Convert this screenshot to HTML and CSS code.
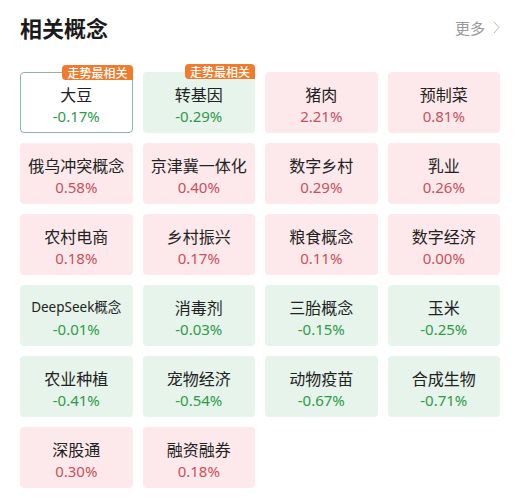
FILE: index.html
```html
<!DOCTYPE html>
<html lang="zh-CN">
<head>
<meta charset="utf-8">
<link rel="stylesheet" href="styles.css">
</head>
<body>
<div class="panel">
  <div class="header">
    <h1 class="title">相关概念</h1>
    <div class="more">更多<svg class="chev" width="7" height="13" viewBox="0 0 7 13"><path d="M1 1 L6 6.5 L1 12" fill="none" stroke="#b8b8b8" stroke-width="1"/></svg></div>
  </div>
  <div class="grid">
    <div class="card sel"><span class="badge">走势最相关</span><div class="name">大豆</div><div class="pct down">-0.17%</div></div>
    <div class="card green"><span class="badge">走势最相关</span><div class="name">转基因</div><div class="pct down">-0.29%</div></div>
    <div class="card red"><div class="name">猪肉</div><div class="pct up">2.21%</div></div>
    <div class="card red"><div class="name">预制菜</div><div class="pct up">0.81%</div></div>

    <div class="card red"><div class="name">俄乌冲突概念</div><div class="pct up">0.58%</div></div>
    <div class="card red"><div class="name">京津冀一体化</div><div class="pct up">0.40%</div></div>
    <div class="card red"><div class="name">数字乡村</div><div class="pct up">0.29%</div></div>
    <div class="card red"><div class="name">乳业</div><div class="pct up">0.26%</div></div>

    <div class="card red"><div class="name">农村电商</div><div class="pct up">0.18%</div></div>
    <div class="card red"><div class="name">乡村振兴</div><div class="pct up">0.17%</div></div>
    <div class="card red"><div class="name">粮食概念</div><div class="pct up">0.11%</div></div>
    <div class="card red"><div class="name">数字经济</div><div class="pct up">0.00%</div></div>

    <div class="card green"><div class="name small">DeepSeek概念</div><div class="pct down">-0.01%</div></div>
    <div class="card green"><div class="name">消毒剂</div><div class="pct down">-0.03%</div></div>
    <div class="card green"><div class="name">三胎概念</div><div class="pct down">-0.15%</div></div>
    <div class="card green"><div class="name">玉米</div><div class="pct down">-0.25%</div></div>

    <div class="card green"><div class="name">农业种植</div><div class="pct down">-0.41%</div></div>
    <div class="card green"><div class="name">宠物经济</div><div class="pct down">-0.54%</div></div>
    <div class="card green"><div class="name">动物疫苗</div><div class="pct down">-0.67%</div></div>
    <div class="card green"><div class="name">合成生物</div><div class="pct down">-0.71%</div></div>

    <div class="card red"><div class="name">深股通</div><div class="pct up">0.30%</div></div>
    <div class="card red"><div class="name">融资融券</div><div class="pct up">0.18%</div></div>
  </div>
</div>
</body>
</html>
```
FILE: styles.css
```css
* { box-sizing: border-box; }
html, body {
  margin: 0;
  padding: 0;
  background: #ffffff;
}
body {
  font-family: "Noto Sans", "Noto Sans CJK SC", sans-serif;
  color: #222222;
}
.panel {
  width: 520px;
  padding: 10px 20px 0 20px;
}
.header {
  display: flex;
  align-items: center;
  justify-content: space-between;
  height: 34px;
}
.title {
  margin: 0;
  font-family: "Noto Sans CJK SC", sans-serif;
  font-size: 22px;
  font-weight: 700;
  color: #1a1a1a;
}
.more {
  display: flex;
  align-items: center;
  gap: 8px;
  font-family: "Noto Sans CJK SC", sans-serif;
  font-size: 15px;
  color: #999999;
}
.chev { display: block; }
.grid {
  margin-top: 28px;
  display: grid;
  grid-template-columns: repeat(4, 1fr);
  grid-auto-rows: 61px;
  column-gap: 10px;
  row-gap: 10px;
}
.card {
  position: relative;
  border-radius: 4px;
  display: flex;
  flex-direction: column;
  align-items: center;
  justify-content: center;
  padding-top: 5px;
}
.card.red { background: #fde9eb; }
.card.green { background: #e6f4eb; }
.card.sel {
  background: #ffffff;
  border: 1px solid #8db5a4;
}
.name {
  font-family: "Noto Sans CJK SC", sans-serif;
  font-size: 16px;
  line-height: 22px;
  color: #222222;
}
.name.small {
  font-family: "Noto Sans", "Noto Sans CJK SC", sans-serif;
  font-size: 13.5px;
}
.pct {
  font-family: "Noto Sans", sans-serif;
  font-size: 15px;
  line-height: 22px;
}
.pct.up { color: #c9505c; }
.pct.down { color: #2f9a48; }
.badge {
  position: absolute;
  top: -8px;
  right: -1px;
  height: 15px;
  padding: 0 5px;
  background: #f07b2c;
  color: #ffffff;
  font-family: "Noto Sans CJK SC", sans-serif;
  font-size: 12px;
  font-weight: 500;
  line-height: 15px;
  border-radius: 4px 4px 0 4px;
}
.card.green .badge { right: 0; }
```
